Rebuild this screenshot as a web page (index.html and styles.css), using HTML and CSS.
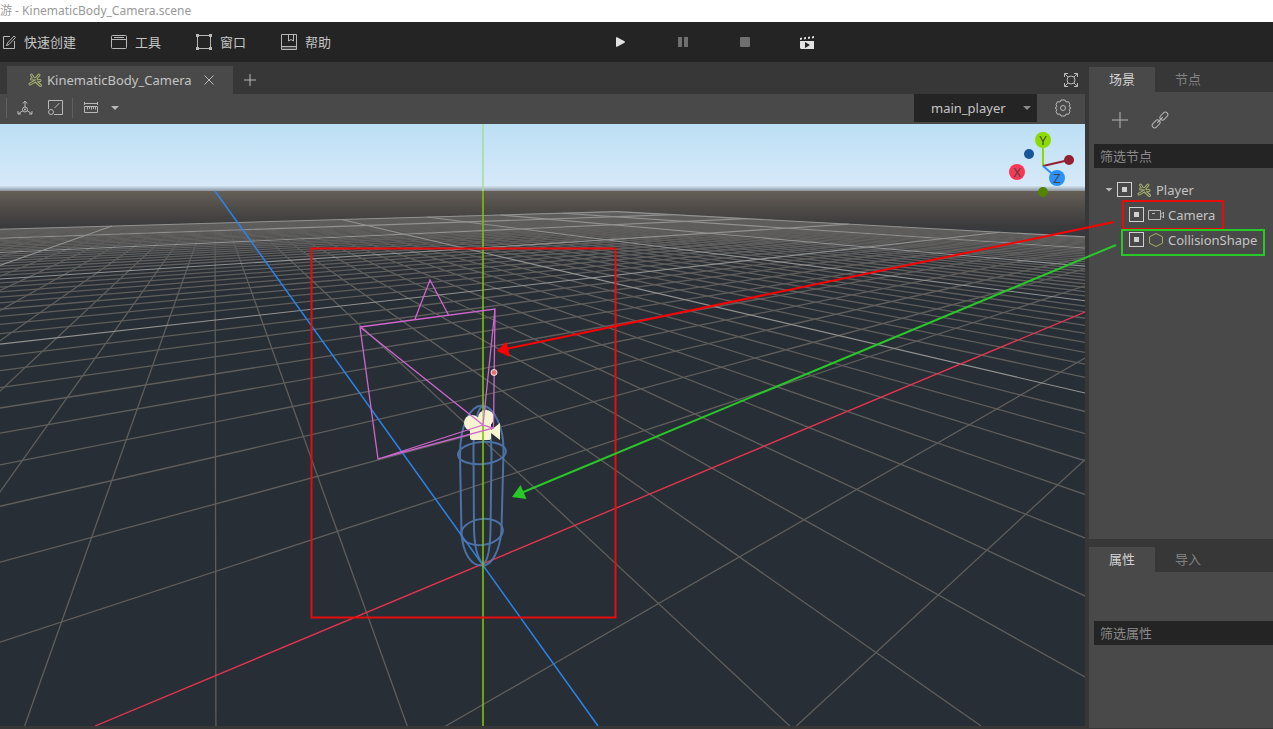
FILE: index.html
```html
<!DOCTYPE html>
<html lang="zh-CN">
<head>
    <meta charset="UTF-8">
    <meta name="viewport" content="width=device-width, initial-scale=1.0">
    <title>KinematicBody_Camera.scene</title>
    <link rel="stylesheet" href="styles.css">
</head>
<body>
    <header class="titlebar">游 - KinematicBody_Camera.scene</header>

    <div class="menubar">
        <nav class="menus">
            <button class="menu">
                <svg class="icon" viewBox="0 0 16 16"><path d="M10 2.500H3.500V14.500H14.500V7M6.500 11.500L7.500 9L14 2L15.500 3.500L9 10.500Z"/></svg>
                <span>快速创建</span>
            </button>
            <button class="menu">
                <svg class="icon" viewBox="0 0 16 16"><rect x="0.500" y="1.500" width="15" height="13" rx="1"/><path d="M3 3.500H13M0.500 5.500H15.500"/></svg>
                <span>工具</span>
            </button>
            <button class="menu">
                <svg class="icon" viewBox="0 0 16 16"><rect x="1.500" y="1.500" width="13" height="13"/><path class="solid" d="M0 0h3v3H0zM13 0h3v3h-3zM0 13h3v3H0zM13 13h3v3h-3z"/></svg>
                <span>窗口</span>
            </button>
            <button class="menu">
                <svg class="icon" viewBox="0 0 16 16"><path d="M0.500 0.500H15.500V15.500H0.500ZM0.500 12.500H15.500M7.500 0.500V7L10 5.500L12.500 7V0.500"/><path d="M1 14H15" opacity="0.500"/></svg>
                <span>帮助</span>
            </button>
        </nav>
        <div class="controls">
            <button class="control" aria-label="运行"><svg class="icon bright" viewBox="0 0 16 16"><path class="solid" d="M4 3.500Q4 3 5 3.200L12.500 7.200Q13.500 8 12.500 8.800L5 12.800Q4 13 4 12.500Z"/></svg></button>
            <button class="control" aria-label="暂停"><svg class="icon dim" viewBox="0 0 16 16"><path class="solid" d="M4 3h4v10H4zM10 3h4v10h-4z"/></svg></button>
            <button class="control" aria-label="停止"><svg class="icon dim" viewBox="0 0 16 16"><rect class="solid" x="4" y="3" width="10" height="10" rx="1"/></svg></button>
            <button class="control" aria-label="运行场景">
                <svg class="icon bright" viewBox="0 0 16 16"><path class="solid" fill-rule="evenodd" d="M2 7H16V15H3L2 14ZM7 8V14L12 11Z"/><path class="solid" d="M2 4l2-.5v2L2 6zM6 3.500l2-.5v2l-2 .5zM10 3l2-.5v2l-2 .5zM14 2.500l2-.5v2l-2 .5z"/></svg>
            </button>
        </div>
    </div>

    <main class="editor">
        <section class="workspace">
            <div class="scene-tabs">
                <div class="scene-tab">
                    <svg class="icon olive" viewBox="0 0 16 16"><use href="#body-icon"/></svg>
                    <span>KinematicBody_Camera</span>
                    <button class="close" aria-label="关闭"><svg class="icon" viewBox="0 0 16 16"><path d="M3.500 3.500L12.500 12.500M12.500 3.500L3.500 12.500"/></svg></button>
                </div>
                <button class="add" aria-label="新建场景"><svg class="icon" viewBox="0 0 16 16"><path d="M8 2V14M2 8H14"/></svg></button>
                <button class="expand" aria-label="全屏"><svg class="icon" viewBox="0 0 16 16"><circle cx="8" cy="8" r="4"/><path d="M1.500 5V1.500H5M11 1.500H14.500V5M14.500 11V14.500H11M5 14.500H1.500V11M1.500 1.500L5 5M14.500 1.500L11 5M14.500 14.500L11 11M1.500 14.500L5 11"/></svg></button>
            </div>

            <div class="toolbar">
                <span class="divider"></span>
                <button class="tool" aria-label="变换"><svg class="icon" viewBox="0 0 16 16"><path d="M8 7V1.500M6 3.500L8 1L10 3.500M6 10.500L1 14M1 11V14H4M10 10.500L15 14M15 11V14H12"/><circle cx="8" cy="9.500" r="2.500"/><circle class="solid" cx="8" cy="9.500" r="1"/></svg></button>
                <button class="tool" aria-label="缩放"><svg class="icon" viewBox="0 0 16 16"><path d="M1.500 9V0.500H15.500V14.500H7M7.500 8L12.500 3"/><circle cx="4" cy="12" r="2.500"/></svg></button>
                <span class="divider"></span>
                <button class="tool ruler" aria-label="吸附">
                    <svg class="icon" viewBox="0 0 16 16"><path d="M1 3.500H15M1.500 2V5M14.500 2V5M1.500 6.500H14.500V12.500H1.500ZM4.500 7V9.500M6.500 7V9M8.500 7V9.500M10.500 7V9M12.500 7V9.500"/></svg>
                    <span class="caret"></span>
                </button>
                <label class="picker">
                    <select aria-label="相机"><option>main_player</option></select>
                    <span class="caret"></span>
                </label>
                <button class="tool gear" aria-label="设置"><svg class="icon large" viewBox="0 0 18 18"><path d="M7 1H11L12 3L14.500 2.700L16 5.500L15 7.500L17 9L15 10.500L16 12.500L14.500 15.300L12 15L11 17H7L6 15L3.500 15.300L2 12.500L3 10.500L1 9L3 7.500L2 5.500L3.500 2.700L6 3Z"/><circle cx="9" cy="9" r="2.500"/></svg></button>
            </div>

            <svg class="viewport" viewBox="0 124 1085 602" preserveAspectRatio="none">
                <defs>
                    <linearGradient id="sky" gradientUnits="userSpaceOnUse" x1="0" y1="124" x2="0" y2="191">
                        <stop offset="0" stop-color="#bcdff5"/>
                        <stop offset="0.920" stop-color="#d6e9f9"/>
                        <stop offset="1" stop-color="#8d959d"/>
                    </linearGradient>
                    <linearGradient id="ground" gradientUnits="userSpaceOnUse" x1="0" y1="191" x2="0" y2="300">
                        <stop offset="0" stop-color="#655f58"/>
                        <stop offset="0.150" stop-color="#504c48"/>
                        <stop offset="0.320" stop-color="#3b3b3d"/>
                        <stop offset="0.600" stop-color="#2c3137"/>
                        <stop offset="1" stop-color="#282e35"/>
                    </linearGradient>
                </defs>
                <rect y="124" width="1085" height="67" fill="url(#sky)"/>
                <rect y="191" width="1085" height="535" fill="url(#ground)"/>
                <g id="grid"></g>

                <!-- world axes -->
                <path class="axis-z" d="M215 191L598 726"/>
                <path class="axis-x" d="M95 726L1085 312"/>

                <!-- capsule shape -->
                <g class="capsule">
                    <path d="M460 455C460 425 470 406 482 405.500C494 406 504 428 503.500 451L501.500 530C500 550 492 566 482 565.500C472 566 463 555 461.500 533Z"/>
                    <path d="M473.500 455C473 425 478 407 483 406C488 407 491 430 491.500 455L490.500 530C490 550 487 562 483 564C477 558 474.500 545 474 530Z"/>
                    <ellipse cx="482" cy="453" rx="24" ry="11" transform="rotate(-5 482 453)"/>
                    <ellipse cx="482" cy="532" rx="21" ry="13" transform="rotate(-8 482 532)"/>
                </g>

                <!-- camera icon -->
                <g class="camera-body">
                    <circle cx="472" cy="423" r="8"/>
                    <circle cx="486" cy="418" r="8"/>
                    <path d="M470 424H491V430L500 423V440L491 433V438Q491 440 489 440H472Q470 440 470 438Z"/>
                </g>
                <path class="axis-y" d="M483 191V410M483 426V726"/>
                <path class="axis-y faint" d="M483 410V426"/>
                <path class="axis-y far" d="M483 124V191"/>

                <!-- camera frustum -->
                <g class="frustum">
                    <path d="M360 327L495 309L493.500 428L378 459ZM483 425L360 327M483 425L495 309M483 425L493.500 428M483 425L378 459M415 319L430 280L448.500 315"/>
                </g>
                <circle class="handle" cx="494" cy="372.500" r="3"/>

                <!-- orientation gizmo -->
                <g class="gizmo">
                    <path stroke="#8cdb00" d="M1043 166V140"/>
                    <path stroke="#931f33" d="M1043 166L1069 160"/>
                    <path stroke="#2b8ffc" d="M1043 166L1057 178"/>
                    <circle fill="#18569b" cx="1029" cy="154" r="5"/>
                    <circle fill="#931f33" cx="1069" cy="160" r="5"/>
                    <circle fill="#528400" cx="1043" cy="192" r="5"/>
                    <circle fill="#8cdb00" cx="1043" cy="140" r="8"/>
                    <circle fill="#fb3655" cx="1017" cy="172" r="8"/>
                    <circle fill="#2b8ffc" cx="1057" cy="178" r="8"/>
                    <text x="1043" y="145">Y</text>
                    <text x="1017" y="177">X</text>
                    <text x="1057" y="183">Z</text>
                </g>
            </svg>
        </section>

        <aside class="docks">
            <section class="dock scene-dock">
                <div class="dock-tabs">
                    <button class="dock-tab active">场景</button>
                    <button class="dock-tab">节点</button>
                </div>
                <div class="dock-panel">
                    <div class="dock-tools">
                        <button aria-label="添加节点"><svg class="icon" viewBox="0 0 16 16"><path d="M8 0V16M0 8H16"/></svg></button>
                        <button aria-label="实例化"><svg class="icon large" viewBox="0 0 18 18"><g transform="rotate(-45 9 9)"><rect x="-1" y="6.500" width="9" height="5" rx="2.500"/><rect x="10" y="6.500" width="9" height="5" rx="2.500"/><path d="M5 9H13"/></g></svg></button>
                    </div>
                    <input class="filter" type="text" placeholder="筛选节点" aria-label="筛选节点">
                    <ul class="tree">
                        <li class="node">
                            <span class="caret"></span>
                            <input type="checkbox" id="node-player" checked>
                            <svg class="icon olive" viewBox="0 0 16 16"><use href="#body-icon"/></svg>
                            <label for="node-player">Player</label>
                        </li>
                        <li class="node child">
                            <input type="checkbox" id="node-camera" checked>
                            <svg class="icon" viewBox="0 0 16 16"><path d="M0.500 3.500H12.500V12.500H0.500ZM12.500 7H13.500L15.500 5V11L13.500 9H12.500M4 6.500H7"/></svg>
                            <label for="node-camera">Camera</label>
                        </li>
                        <li class="node child">
                            <input type="checkbox" id="node-shape" checked>
                            <svg class="icon olive" viewBox="0 0 16 16"><path d="M8 1.500L14.500 4.800V11.200L8 14.500L1.500 11.200V4.800Z"/></svg>
                            <label for="node-shape">CollisionShape</label>
                        </li>
                    </ul>
                </div>
            </section>
            <section class="dock inspector-dock">
                <div class="dock-tabs">
                    <button class="dock-tab active">属性</button>
                    <button class="dock-tab">导入</button>
                </div>
                <div class="dock-panel">
                    <div class="dock-tools"></div>
                    <input class="filter" type="text" placeholder="筛选属性" aria-label="筛选属性">
                </div>
            </section>
        </aside>
    </main>

    <!-- callouts linking the tree nodes to the viewport -->
    <svg class="callouts" viewBox="0 0 1273 729" preserveAspectRatio="none">
        <g class="red">
            <rect x="311.500" y="248.500" width="304" height="369"/>
            <rect x="1123" y="201" width="100" height="28"/>
            <path d="M1114 222L506 349"/>
            <path class="head" d="M497 351L506.500 341.500L510 357Z"/>
        </g>
        <g class="green">
            <rect x="1122" y="230" width="142" height="25"/>
            <path d="M1116 245L521 493"/>
            <path class="head" d="M512 497L520.500 485L526.500 499Z"/>
        </g>
    </svg>

    <svg class="symbols">
        <!-- stick figure drawn as an outline: wide stroke with a thin core over it -->
        <symbol id="body-icon" viewBox="0 0 16 16">
            <g id="figure" fill="none" stroke="currentColor" stroke-width="3" stroke-linecap="round" stroke-linejoin="round">
                <path d="M12 3L9 6.500L9.500 10L13.500 13.500M9 6.500L4.500 7M4.500 3L7 7M8.500 9L3 12M9.500 9L13 8.500"/>
            </g>
            <path d="M12 3L9 6.500L9.500 10L13.500 13.500M9 6.500L4.500 7M4.500 3L7 7M8.500 9L3 12M9.500 9L13 8.500" class="core"/>
        </symbol>
    </svg>

    <script src="grid.js"></script>
</body>
</html>
```

FILE: styles.css
```css
* {
    margin: 0;
    padding: 0;
    box-sizing: border-box;
}

body {
    height: 100vh;
    overflow: hidden;
    display: flex;
    flex-direction: column;
    background: #373737;
    color: #c4c4c4;
    font-family: "Noto Sans", "Noto Sans CJK SC", sans-serif;
    font-size: 13px;
}

button {
    display: flex;
    align-items: center;
    justify-content: center;
    background: none;
    border: none;
    color: inherit;
    font: inherit;
}

.icon {
    width: 16px;
    height: 16px;
    flex: none;
    fill: none;
    stroke: currentColor;
    stroke-width: 1;
    color: #b8b8b8;
}

.icon.large {
    width: 18px;
    height: 18px;
}

.icon .solid {
    fill: currentColor;
    stroke: none;
}

.icon.bright { color: #e2e2e2; }
.icon.dim { color: #6f6f6f; }
.icon.olive { color: #a3ac6c; }

.core {
    fill: none;
    stroke: #494949;
    stroke-width: 1;
    stroke-linecap: round;
}

.caret {
    width: 8px;
    height: 4px;
    flex: none;
    background: #b8b8b8;
    clip-path: polygon(0 0, 100% 0, 50% 100%);
}

.symbols {
    display: none;
}

/* title and menu */
.titlebar {
    height: 22px;
    line-height: 21px;
    background: #ffffff;
    color: #999999;
    font-size: 12px;
}

.menubar {
    height: 40px;
    display: flex;
    align-items: center;
    background: #242424;
}

.menus {
    width: 48%;
    display: flex;
    gap: 35px;
}

.menu {
    gap: 8px;
    white-space: nowrap;
}

.menu span {
    padding-bottom: 2px;
}

.controls {
    display: flex;
    gap: 46px;
    padding-left: 1px;
}

/* workspace */
.editor {
    flex: 1;
    min-height: 0;
    display: flex;
    gap: 4px;
}

.workspace {
    flex: 1;
    min-width: 0;
    display: flex;
    flex-direction: column;
    padding-bottom: 3px;
}

.scene-tabs {
    height: 32px;
    display: flex;
    align-items: center;
    padding: 4px 6px 0 7px;
}

.scene-tab {
    height: 28px;
    display: flex;
    align-items: center;
    gap: 4px;
    padding: 0 16px 0 20px;
    background: #494949;
}

.close {
    margin-left: 5px;
}

.add {
    margin-left: 9px;
}

.expand {
    margin-left: auto;
}

.toolbar {
    height: 30px;
    display: flex;
    align-items: center;
    padding: 0 13px 2px 6px;
    background: #494949;
}

.divider {
    width: 1px;
    height: 20px;
    background: #606060;
}

.tool {
    margin-left: 10px;
}

.tool + .tool {
    margin-left: 14px;
}

.tool + .divider {
    margin-left: 9px;
}

.ruler {
    gap: 12px;
}

.picker {
    width: 123px;
    height: 28px;
    margin-left: auto;
    display: grid;
    align-items: center;
    background: #242424;
}

.picker select,
.picker .caret {
    grid-area: 1 / 1;
}

.picker select {
    height: 28px;
    padding-left: 17px;
    appearance: none;
    background: none;
    border: none;
    color: #c4c4c4;
    font: inherit;
}

.picker .caret {
    justify-self: end;
    margin-right: 6px;
    background: #8a8a8a;
}

.tool.gear {
    margin-left: 17px;
}

/* 3D viewport */
.viewport {
    display: block;
    flex: 1;
    width: 100%;
    min-height: 0;
    fill: none;
}

.grid-line {
    stroke: #5f5e5d;
    stroke-width: 1.300;
}

.grid-line.major {
    stroke: #929291;
    stroke-width: 1.100;
}

.axis-x { stroke: #ea3450; stroke-width: 1.300; }
.axis-y { stroke: #7cc010; stroke-width: 1.600; }
.axis-y.far { stroke: #a6dca0; }
.axis-y.faint { stroke: #b9d957; }
.axis-z { stroke: #2b84ea; stroke-width: 1.500; }

.camera-body {
    fill: #f7f4d2;
}

.capsule {
    stroke: #5279b4;
    stroke-width: 2;
    opacity: 0.900;
}

.frustum {
    stroke: #cf66cf;
    stroke-width: 1.300;
}

.handle {
    fill: #ee6f70;
    stroke: #f4e1e1;
}

.gizmo path {
    stroke-width: 2;
}

.gizmo text {
    fill: #45483c;
    font-size: 13px;
    text-anchor: middle;
}

/* docks */
.docks {
    width: 184px;
    display: flex;
    flex-direction: column;
    gap: 8px;
    padding: 5px 0 1px;
}

.dock {
    min-height: 0;
    display: flex;
    flex-direction: column;
}

.scene-dock { flex: 13 1 0; }
.inspector-dock { flex: 5 1 0; }

.dock-tabs {
    height: 25px;
    display: flex;
}

.dock-tab {
    width: 66px;
    padding-bottom: 2px;
    color: #828282;
}

.dock-tab.active {
    background: #494949;
    color: #d2d2d2;
}

.dock-panel {
    flex: 1;
    padding-left: 5px;
    background: #494949;
}

.dock-tools {
    height: 52px;
    display: flex;
    align-items: center;
    gap: 23px;
    padding: 4px 0 0 18px;
}

.inspector-dock .dock-tools {
    height: 49px;
}

.filter {
    display: block;
    width: 100%;
    height: 24px;
    padding: 0 6px;
    background: #242424;
    border: none;
    color: #c4c4c4;
    font: inherit;
}

.filter::placeholder {
    color: #8a8a8a;
}

.tree {
    list-style: none;
    padding: 9px 0 0 11px;
}

.node {
    height: 25px;
    display: flex;
    align-items: center;
    gap: 4px;
}

.node.child {
    padding-left: 24px;
}

.node input {
    width: 15px;
    height: 15px;
    appearance: none;
    border: 1px solid #d0d0d0;
    display: grid;
    place-items: center;
}

.node input:checked::before {
    content: "";
    width: 5px;
    height: 5px;
    background: #d0d0d0;
}

/* callouts */
.callouts {
    position: absolute;
    top: 0;
    left: 0;
    width: 100%;
    height: 100%;
    fill: none;
    stroke-width: 2;
    pointer-events: none;
}

.red { stroke: #e60d0d; }
.red path { stroke: #ff0000; }
.green { stroke: #28c828; }
.red .head { fill: #ff0000; stroke: none; }
.green .head { fill: #28c828; stroke: none; }
```

FILE: grid.js
```js
const SVG_NS = 'http://www.w3.org/2000/svg';
const grid = document.getElementById('grid');
const SIZE = 50;
const HORIZON = 190;
const BOTTOM = 726;

// vanishing points of the two ground directions
const vanishX = { x: 1377, y: HORIZON };
const vanishZ = { x: 215, y: HORIZON };

// where line number n meets the bottom edge / left edge
function bottomPoint(n) {
    return { x: 598.5 + 191.3 * n, y: BOTTOM };
}

function leftPoint(n) {
    return { x: 0, y: HORIZON + 575.8 / (1 - 0.2735 * n) };
}

function intersect(a, b, c, d) {
    const s1 = (b.y - a.y) / (b.x - a.x);
    const s2 = (d.y - c.y) / (d.x - c.x);
    const x = (c.y - a.y + s1 * a.x - s2 * c.x) / (s1 - s2);
    return { x: x, y: a.y + s1 * (x - a.x) };
}

function addLine(from, to, major) {
    const line = document.createElementNS(SVG_NS, 'line');
    line.setAttribute('x1', from.x);
    line.setAttribute('y1', from.y);
    line.setAttribute('x2', to.x);
    line.setAttribute('y2', to.y);
    line.setAttribute('class', major ? 'grid-line major' : 'grid-line');
    grid.appendChild(line);
}

function drawLines(major) {
    for (let n = -SIZE; n <= SIZE; n++) {
        if (n === 0 || (n % 10 === 0) !== major) continue;
        const near = bottomPoint(n);
        addLine(near, intersect(vanishZ, near, vanishX, leftPoint(-SIZE)), major);
        if (n < 3) {
            const left = leftPoint(n);
            addLine(left, intersect(vanishX, left, vanishZ, bottomPoint(SIZE)), major);
        }
    }
}

drawLines(false);
drawLines(true);
```
